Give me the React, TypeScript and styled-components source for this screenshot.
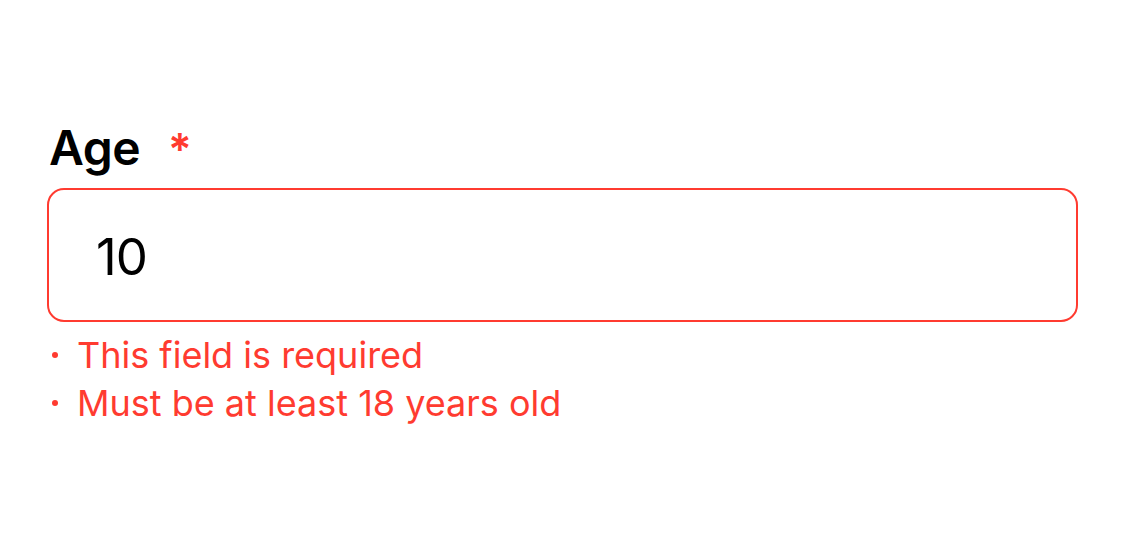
import React from "react";
import styled, { createGlobalStyle } from "styled-components";

const Global = createGlobalStyle`
  html, body { margin: 0; padding: 0; background: #ffffff; }
  body { font-family: Inter, "Noto Sans", sans-serif; -webkit-font-smoothing: antialiased; }
`;

const RED = "#ff3b30";

const Page = styled.div`
  width: 1125px;
  height: 540px;
  box-sizing: border-box;
  padding: 119px 47px 0 47px;
  display: flex;
  flex-direction: column;
`;

const Label = styled.label`
  display: flex;
  align-items: baseline;
  font-size: 48px;
  line-height: 58px;
  font-weight: 600;
  color: #000;
  margin-left: 2px;
  letter-spacing: -0.5px;
`;

const Required = styled.span`
  color: ${RED};
  margin-left: 28px;
  font-size: 44px;
  font-weight: 600;
`;

const InputBox = styled.div`
  margin-top: 10px;
  height: 134px;
  box-sizing: border-box;
  border: 2.5px solid ${RED};
  border-radius: 17px;
  display: flex;
  align-items: center;
  padding-left: 47px;
`;

const Value = styled.span`
  font-size: 51px;
  color: #000;
  font-weight: 400;
  letter-spacing: -1px;
  margin-top: 3px;
`;

const Errors = styled.ul`
  list-style: none;
  margin: 9px 0 0 0;
  padding: 0;
  display: flex;
  flex-direction: column;
`;

const ErrorItem = styled.li`
  display: flex;
  align-items: center;
  font-size: 36px;
  line-height: 48px;
  color: ${RED};
  font-weight: 400;
`;

const Dot = styled.span`
  width: 6px;
  height: 6px;
  border-radius: 50%;
  background: ${RED};
  margin-left: 5px;
  margin-right: 19px;
  flex-shrink: 0;
`;

const errors = ["This field is required", "Must be at least 18 years old"];

export default function App() {
  return (
    <>
      <Global />
      <Page>
        <Label>
          Age<Required>*</Required>
        </Label>
        <InputBox>
          <Value>10</Value>
        </InputBox>
        <Errors>
          {errors.map((e) => (
            <ErrorItem key={e}>
              <Dot />
              {e}
            </ErrorItem>
          ))}
        </Errors>
      </Page>
    </>
  );
}
